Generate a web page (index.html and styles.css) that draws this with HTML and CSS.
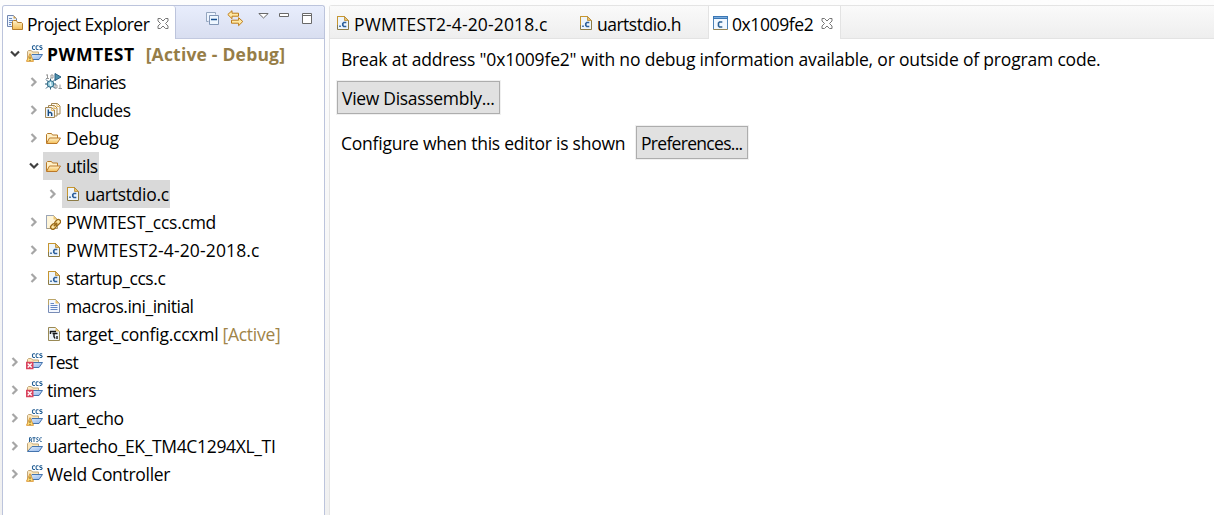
FILE: index.html
```html
<!DOCTYPE html>
<html lang="en">
<head>
<meta charset="utf-8">
<title>Project Explorer</title>
<link rel="stylesheet" href="styles.css">
</head>
<body>

<!-- icons -->
<svg class="defs" width="0" height="0">
	<linearGradient id="gold" x1="0" y1="0" x2="0" y2="1"><stop offset="0" stop-color="#fff3cd"/><stop offset="1" stop-color="#f3bd55"/></linearGradient>
	<linearGradient id="blue" x1="0" y1="0" x2="1" y2="1"><stop offset="0" stop-color="#e2f0ff"/><stop offset="1" stop-color="#8fb4ea"/></linearGradient>
	<symbol id="right" viewBox="0 0 8 10"><path d="M1.500 1l4 4-4 4" fill="none" stroke="#a6a6a6" stroke-width="2.200"/></symbol>
	<symbol id="down" viewBox="0 0 10 8"><path d="M1 1.500l4 4 4-4" fill="none" stroke="#404040" stroke-width="2.200"/></symbol>
	<symbol id="close" viewBox="0 0 12 11"><path d="M1 .5h2.500L6 3 8.500.5H11V3L8.500 5.500 11 8v2.500H8.500L6 8l-2.500 2.500H1V8l2.500-2.500L1 3z" fill="#fff" stroke="#777"/></symbol>
	<symbol id="folder" viewBox="0 0 16 16"><path d="M1.500 13V4.500l1-1h4l1 1.500h5v3" fill="#fff1c9" stroke="#b77a28"/><path d="M1.500 13.500L4.500 8H15.500l-3.500 5.500z" fill="url(#gold)" stroke="#bb7828"/></symbol>
	<symbol id="file" viewBox="0 0 12 14"><path d="M.5.5h7l4 4v9H.5z" fill="#edf5fc" stroke="#8c7b45"/><path d="M.5 9V.5h7" fill="none" stroke="#c8962e"/><path d="M7.500.5v4h4z" fill="#eac16c" stroke="#b88a35" stroke-width=".8"/></symbol>
	<symbol id="cfile" viewBox="0 0 12 14"><use href="#file" width="12" height="14"/><path d="M2.200 9.500h1.600v1.600H2.200z" fill="#2d609b"/><path d="M9.300 6.500H6.800l-1 1v2l1 1h2.500" fill="none" stroke="#2d609b" stroke-width="1.700"/></symbol>
	<symbol id="text" viewBox="0 0 12 14"><path d="M.5.5h7l4 4v9H.5z" fill="#f4f8ff" stroke="#788cb6"/><path d="M.5 6V.5h7" fill="none" stroke="#bda665"/><path d="M7.500.5v4h4z" fill="#eac16c"/><path d="M2.500 4.500H6M2.500 6.500h7M2.500 8.500h7M2.500 10.500h7" stroke="#6687c3"/></symbol>
	<symbol id="target" viewBox="0 0 12 14"><path d="M.5.5h7l4 4v9H.5z" fill="#eff4f8" stroke="#998955"/><path d="M7.500.5v4h4z" fill="#eac16c"/><path d="M2 4.500h6M2.500 4v3M4.500 6.500h5M6 6.500v3l1 2M9 9v3" fill="none" stroke="#171717" stroke-width="1.400"/></symbol>
	<symbol id="link" viewBox="0 0 16 16"><path d="M1.500 1.500h7l4 4v9h-11z" fill="#fff5d8" stroke="#a79b7c"/><path d="M1.500 14.500v-13h7" fill="none" stroke="#9aa5b8"/><path d="M8.500 1.500v4h4z" fill="#ebc574"/><g transform="rotate(-45 10.500 10.500)" fill="#ffe9a8" stroke="#9a6a18" stroke-width="1.300"><rect x="4.600" y="8.300" width="6" height="4.400" rx="2"/><rect x="10.600" y="8.300" width="6" height="4.400" rx="2"/><path d="M8 10.500h5"/></g></symbol>
	<symbol id="includes" viewBox="0 0 16 16"><g fill="#fffaf0" stroke="#a28755"><path d="M6.500 1.500h6l2.500 2.500v8H6.500z"/><path d="M3.500 3.500h6l2.500 2.500v8H3.500z"/><path d="M.5 5.500h6L9.500 8v7.500h-9z" fill="#edf3f9"/></g><path d="M12 2v2.500h2.500M9 4v2.500h2.500M6.500 6v2.500H9" fill="none" stroke="#e9bb61"/><path d="M3.300 7.500v6.500M3.300 10.500h2.400l1 1V14" fill="none" stroke="#174d84" stroke-width="1.400"/></symbol>
	<symbol id="bin" viewBox="0 0 17 16"><path d="M2.500 1v4M1 1.500h1.500M1 5h3M6 1.500h2v3H6zM10 11.500h2v3h-2zM15 11v4M13.500 15H17" fill="none" stroke="#999"/><path d="M10 0l6 3.500-6 3.500z" fill="#4f91ac" stroke="#275e82"/><path d="M1 6l9 9M10 6l-9 9M0 10.500h11M5.500 5v11" stroke="#315e79"/><circle cx="5.500" cy="10.500" r="3.300" fill="#96cbdc" stroke="#286582"/><path d="M4 10l3 2M5.500 8.500v4" stroke="#e8fbff"/></symbol>
	<symbol id="project" viewBox="0 0 17 17"><path d="M1.500 14V6.500l1-1h3l1 1.500h6V10" fill="#fbe7bd" stroke="#c2a778"/><path d="M1.500 14.500L6 9.500h10.500L13 14.500z" fill="url(#blue)" stroke="#4474ae"/></symbol>
	<symbol id="ccs" viewBox="0 0 17 17"><use href="#project" width="17" height="17"/><path d="M5.500 0h11.500v5.500H5.500z" fill="#fff"/><path d="M9 .7H7.300l-.8.8v2l.8 1H9M12.500.7h-1.600l-.8.8v2l.8 1h1.600M16.200.7h-1.800l-.7.8.7 1h1l.8.900-.8 1.100h-1.800" fill="none" stroke="#286297" stroke-width="1.100"/></symbol>
	<symbol id="warn" viewBox="0 0 8 9"><path d="M4 .7l3.500 7.600H.5z" fill="#ffe07a" stroke="#dc9838"/><path d="M4 3.500v2.500M4 6.800V8" stroke="#705a20" stroke-width="1"/></symbol>
	<symbol id="error" viewBox="0 0 8 8"><path d="M0 0h7.500v8H0z" fill="#d9445e"/><path d="M1.700 2l4 4M5.700 2l-4 4" stroke="#fff" stroke-width="1.300"/></symbol>
	<symbol id="ccswarn" viewBox="0 0 17 17"><use href="#ccs" width="17" height="17"/><use href="#warn" x="0" y="8" width="8" height="9"/></symbol>
	<symbol id="ccserr" viewBox="0 0 17 17"><use href="#ccs" width="17" height="17"/><use href="#error" x="0" y="8.500" width="8" height="8"/></symbol>
	<symbol id="rtsc" viewBox="0 0 17 17"><use href="#project" width="17" height="17"/><path d="M2.500 0h13v5.500h-13z" fill="#fff"/><path d="M3.500 5V.7H5l.7.8v.7L5 3H3.500M5 3l.8 2M6.500.7h3M8 .7V5M12.500.7h-1.600l-.5.800.5 1h.8l.6 1-.6 1.100h-1.400M15.700.7h-1.200l-.7.8v2l.7 1h1.200" fill="none" stroke="#286297" stroke-width="1"/></symbol>
	<symbol id="explorer" viewBox="0 0 16 16"><path d="M.5.500h6l3 3v8h-9z" fill="#edf5ff" stroke="#7186b0"/><path d="M6.500.500v3h3z" fill="#d6a34c"/><path d="M2 3.500h3M2 5.500h4M2 7.500h3M2 9.500h2" stroke="#6f8cbc"/><path d="M5.500 14.500v-8l1-1h3l1 2h4l1 1v6z" fill="url(#gold)" stroke="#b57d2c"/></symbol>
	<symbol id="window" viewBox="0 0 15 14"><path d="M.5.500h14v13H.5z" fill="#f2f8ff" stroke="#938455"/><path d="M.5 13V.500h14V13" fill="none" stroke="#4e83b6"/><path d="M0 0h15v3H0z" fill="#3c78b5"/><path d="M1 1h13v1H1z" fill="#7cadde"/><path d="M9.300 6H6.500l-1 1v3l1 1h2.800" fill="none" stroke="#2c6194" stroke-width="1.600"/></symbol>
	<symbol id="collapse" viewBox="0 0 13 13"><path d="M.5 9.500v-9h9v2" fill="#eef5ff" stroke="#94a6bf"/><path d="M.5 9.500h2" stroke="#94a6bf"/><path d="M3.500 3.500h9v9h-9z" fill="#eef7ff" stroke="#8196b5"/><path d="M5 7.500h6" stroke="#164f90" stroke-width="1.500"/></symbol>
	<symbol id="sync" viewBox="0 0 17 17"><path d="M.8 4.500L5 .7v2.500h6.500v3H5v2.500z" fill="#ffe9a4" stroke="#bd7b18"/><path d="M15.800 11.500l-4.200-3.800v2.500H4.500v3h7.100v2.500z" fill="#ffe9a4" stroke="#bd7b18"/></symbol>
</svg>

<div class="workbench">
	<div class="explorer">
		<div class="explorer-head">
			<div class="view-tab">
				<svg class="i-explorer"><use href="#explorer"/></svg>
				<span class="t-view">Project Explorer</span>
				<svg class="i-close"><use href="#close"/></svg>
			</div>
			<div class="view-tools">
				<svg width="13" height="13"><use href="#collapse"/></svg>
				<svg class="tool-sync" width="17" height="17"><use href="#sync"/></svg>
				<svg class="tool-menu" width="11" height="6"><path d="M.8.500h9.400L5.500 5z" fill="#fff" stroke="#696969"/></svg>
				<svg class="tool-min" width="10" height="4"><path d="M.5.500h9v3h-9z" fill="#fff" stroke="#696969"/></svg>
				<svg class="tool-max" width="10" height="11"><path d="M.5.500h9v10H.500zM.500 2.500h9" fill="#fff" stroke="#696969"/></svg>
			</div>
		</div>

		<div class="tree">
			<div class="row"><svg class="down"><use href="#down"/></svg><div class="item"><svg class="i-proj"><use href="#ccswarn"/></svg><b class="t-root">PWMTEST</b><b class="t-config">[Active - Debug]</b></div></div>
			<div class="row sub"><svg class="right"><use href="#right"/></svg><div class="item"><svg class="i-proj"><use href="#bin"/></svg><span class="t-binaries">Binaries</span></div></div>
			<div class="row sub"><svg class="right"><use href="#right"/></svg><div class="item"><svg class="i-16"><use href="#includes"/></svg><span class="t-includes">Includes</span></div></div>
			<div class="row sub"><svg class="right"><use href="#right"/></svg><div class="item"><svg class="i-16"><use href="#folder"/></svg><span class="t-debug">Debug</span></div></div>
			<div class="row sub"><svg class="down"><use href="#down"/></svg><div class="item selected"><svg class="i-16"><use href="#folder"/></svg><span class="t-utils">utils</span></div></div>
			<div class="row sub2"><svg class="right"><use href="#right"/></svg><div class="item selected"><svg class="i-file"><use href="#cfile"/></svg><span class="t-uart">uartstdio.c</span></div></div>
			<div class="row sub"><svg class="right"><use href="#right"/></svg><div class="item"><svg class="i-16"><use href="#link"/></svg><span class="t-cmd">PWMTEST_ccs.cmd</span></div></div>
			<div class="row sub"><svg class="right"><use href="#right"/></svg><div class="item"><svg class="i-file"><use href="#cfile"/></svg><span class="t-pwm">PWMTEST2-4-20-2018.c</span></div></div>
			<div class="row sub"><svg class="right"><use href="#right"/></svg><div class="item"><svg class="i-file"><use href="#cfile"/></svg><span class="t-startup">startup_ccs.c</span></div></div>
			<div class="row sub"><svg class="right"></svg><div class="item"><svg class="i-file"><use href="#text"/></svg><span class="t-macros">macros.ini_initial</span></div></div>
			<div class="row sub"><svg class="right"></svg><div class="item"><svg class="i-file"><use href="#target"/></svg><span class="t-target">target_config.ccxml</span><span class="t-active">[Active]</span></div></div>
			<div class="row"><svg class="right"><use href="#right"/></svg><div class="item"><svg class="i-proj"><use href="#ccserr"/></svg><span class="t-test">Test</span></div></div>
			<div class="row"><svg class="right"><use href="#right"/></svg><div class="item"><svg class="i-proj"><use href="#ccserr"/></svg><span class="t-timers">timers</span></div></div>
			<div class="row"><svg class="right"><use href="#right"/></svg><div class="item"><svg class="i-proj"><use href="#ccswarn"/></svg><span class="t-echo">uart_echo</span></div></div>
			<div class="row"><svg class="right"><use href="#right"/></svg><div class="item"><svg class="i-proj"><use href="#rtsc"/></svg><span class="t-ek">uartecho_EK_TM4C1294XL_TI</span></div></div>
			<div class="row"><svg class="right"><use href="#right"/></svg><div class="item"><svg class="i-proj"><use href="#ccswarn"/></svg><span class="t-weld">Weld Controller</span></div></div>
		</div>
	</div>

	<div class="editor">
		<div class="tabs">
			<div class="tab tab-pwm"><svg class="i-file"><use href="#cfile"/></svg><span class="t-pwm">PWMTEST2-4-20-2018.c</span></div>
			<div class="tab tab-uart"><svg class="i-file"><use href="#cfile"/></svg><span class="t-echo">uartstdio.h</span></div>
			<div class="tab tab-active"><svg class="i-window"><use href="#window"/></svg><span class="t-addr">0x1009fe2</span><svg class="i-close"><use href="#close"/></svg></div>
		</div>
		<div class="message"><span class="t-break">Break at address "0x1009fe2" with no debug information available, or outside of program code.</span></div>
		<button class="btn btn-view"><span class="t-dis">View Disassembly...</span></button>
		<div class="config">
			<span class="t-configure">Configure when this editor is shown</span>
			<button class="btn btn-pref"><span class="t-pref">Preferences...</span></button>
		</div>
	</div>
</div>

</body>
</html>
```
FILE: styles.css
```css
body{
	margin: 0;
	height: 515px;
	overflow: hidden;
	background: linear-gradient(#fdfdfd, #f0f0f0);
	font-family: "Open Sans", "Noto Sans", sans-serif;
	font-size: 17.5px;
	color: #000;
}
*{
	box-sizing: border-box;
}
.defs{
	position: absolute;
}
svg{
	flex: none;
	display: block;
}
span,b{
	white-space: nowrap;
}
.workbench{
	display: flex;
	gap: 4px;
	height: 515px;
	padding: 5px 0 0 2px;
}

/* project explorer */
.explorer{
	width: 323px;
	border: 1px solid #bcc4dc;
	border-bottom: 0;
	border-radius: 3px 3px 0 0;
	background: #fff;
}
.explorer-head{
	display: flex;
	height: 33px;
	border-radius: 3px 3px 0 0;
	background: linear-gradient(#e8edfc, #d8def0);
}
.view-tab{
	display: flex;
	align-items: center;
	width: 173px;
	padding: 3px 0 0 4px;
	border-right: 1px solid #bcc4dc;
	border-radius: 3px 3px 0 0;
	background: #fff;
}
.view-tab span{
	width: 123px;
	margin: 0 7px 0 4px;
}
.view-tab .i-explorer{
	margin-top: -3px;
}
.view-tab .i-close{
	margin-top: -2px;
}
.view-tools{
	flex: 1;
	display: flex;
	align-items: flex-start;
	padding: 6px 0 0 30px;
	border-bottom: 1px solid #c2c9df;
}
.tool-sync{
	margin: -2px 0 0 8px;
}
.tool-menu{
	margin: 1px 0 0 14px;
}
.tool-min{
	margin: 1px 0 0 10px;
}
.tool-max{
	margin: 1px 0 0 13px;
}
.tree{
	padding-top: 1px;
}
.row{
	display: flex;
	align-items: center;
	height: 28px;
	padding-left: 7px;
}
.sub{
	padding-left: 26px;
}
.sub2{
	padding-left: 45px;
}
.right{
	width: 8px;
	height: 10px;
	margin: -1px 4px 0 1px;
}
.down{
	width: 10px;
	height: 8px;
	margin: -1px 3px 0 0;
}
.item{
	display: flex;
	align-items: center;
	height: 28px;
	margin-left: 1px;
	padding: 0 1px 0 1px;
}
.selected{
	background: #d9d9d9;
}
.item svg{
	margin-top: -1px;
}
.item span,.item b{
	margin-left: 5px;
}
.item .i-proj{
	width: 17px;
	height: 17px;
	margin-left: 1px;
	margin-right: 0;
}
.item .i-proj + *{
	margin-left: 4px;
}
.i-16,.i-explorer{
	width: 16px;
	height: 16px;
}
.item .i-16{
	margin-left: 1px;
}
.item .i-16 + span{
	margin-left: 5px;
}
.i-file{
	width: 12px;
	height: 14px;
}
.item .i-file{
	margin: -1px 1px 0 4px;
}
.i-window{
	width: 15px;
	height: 14px;
}
.i-close{
	width: 12px;
	height: 11px;
}
.item .t-config{
	margin-left: 11px;
	color: #967d47;
}
.item .t-active{
	margin-left: 4px;
	color: #a08448;
}

/* editor area */
.editor{
	flex: 1;
	border: 1px solid #e4e4e4;
	border-width: 1px 0 0 1px;
	border-radius: 3px 0 0 0;
	background: #fff;
}
.tabs{
	display: flex;
	height: 33px;
	border-bottom: 1px solid #e3e3e3;
	background: linear-gradient(#fafafa, #eee);
}
.tab{
	display: flex;
	align-items: center;
	padding: 3px 0 0 7px;
}
.tab svg{
	margin-top: -2px;
}
.tab span{
	margin-left: 5px;
}
.tab-pwm{
	width: 243px;
}
.tab-uart{
	width: 135px;
}
.tab-active{
	width: 133px;
	height: 33px;
	padding-left: 4px;
	border: 1px solid #e3e3e3;
	border-width: 0 1px;
	background: #fff;
}
.tab-active .t-addr{
	width: 82px;
	margin-left: 4px;
}
.tab-active .i-close{
	margin-left: 7px;
}
.message{
	display: flex;
	align-items: center;
	height: 39px;
	padding-left: 11px;
}
.btn{
	display: flex;
	align-items: center;
	height: 33px;
	padding: 1px 0 0 4px;
	border: 1px solid #adadad;
	border-radius: 0;
	background: #e1e1e1;
	box-shadow: 0 0 0 1px #f0f0f0;
	font: inherit;
	color: #000;
}
.btn-view{
	width: 163px;
	margin: 3px 0 0 7px;
}
.btn-pref{
	width: 112px;
}
.config{
	display: flex;
	align-items: center;
	margin-top: 12px;
	padding-left: 11px;
}
.t-configure{
	width: 295px;
}

/* text fitting */
span{
	letter-spacing: -0.3px;
}
.t-root{
	letter-spacing: 0.5px;
}
.t-config{
	letter-spacing: 0.2px;
}
.t-pwm{
	letter-spacing: 0.13px;
}
.t-view{
	letter-spacing: -0.5px;
}
.t-includes,.t-startup{
	letter-spacing: -0.42px;
}
.t-utils,.t-macros,.t-timers,.t-echo{
	letter-spacing: -0.5px;
}
.t-addr{
	letter-spacing: -0.4px;
}
.t-binaries,.t-test{
	letter-spacing: -0.8px;
}
.t-debug{
	letter-spacing: -0.1px;
}
.t-break{
	letter-spacing: -0.18px;
}
.t-cmd,.t-target,.t-configure,.t-active{
	letter-spacing: -0.24px;
}
.t-ek{
	letter-spacing: -0.34px;
}
.t-pref{
	letter-spacing: -0.7px;
}
```
